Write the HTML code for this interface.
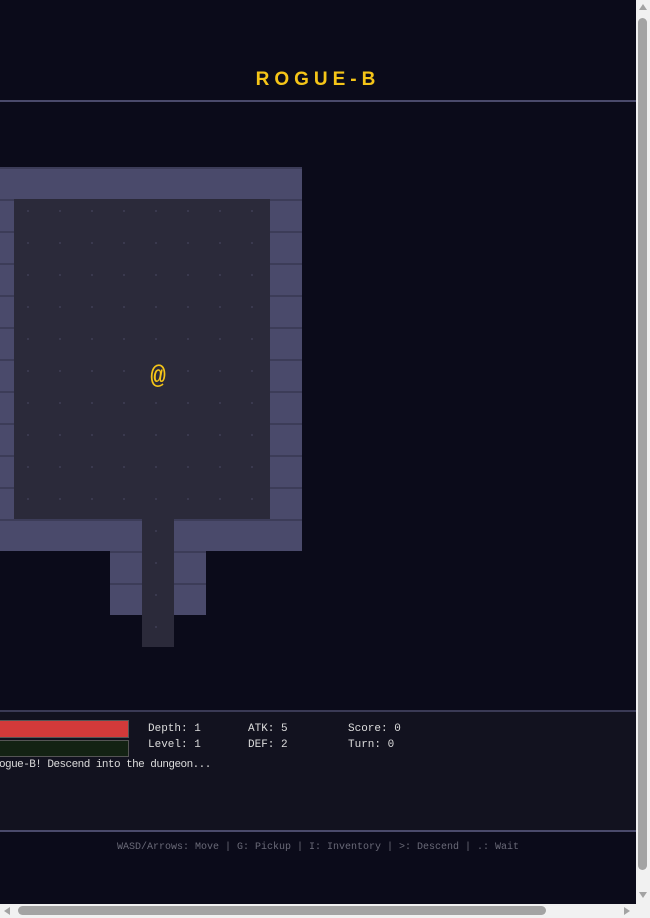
<!DOCTYPE html>
<html><head><meta charset="utf-8"><style>
*{margin:0;padding:0;box-sizing:border-box}
body{width:650px;height:918px;overflow:hidden;background:#f1f1f1;position:relative;font-family:"Liberation Mono",monospace}
#main{position:absolute;left:0;top:0;width:636px;height:904px;background:#0b0b1a;overflow:hidden}
.a{position:absolute}
.title{left:0;width:636px;top:69px;text-align:center;font:bold 19px "Liberation Sans",sans-serif;letter-spacing:5px;color:#f5c518;padding-left:0}
.wall{background-color:#4a4a6b;background-image:linear-gradient(#3c3c58 0 2px,transparent 2px);background-size:32px 32px;background-position:0 0}
.floor{background-color:#2b2a3a;background-image:radial-gradient(circle at 14px 12px,#3b3a50 0 1px,transparent 1.2px);background-size:32px 32px}
.txt{font-size:11px;color:#dcdcdc;white-space:pre;line-height:14px}
</style></head><body>
<div id="main">
  <div class="a title">ROGUE-B</div>
  <div class="a" style="left:0;top:100px;width:636px;height:2px;background:#4a4a6b"></div>

  <div class="a wall" style="left:-18px;top:167px;width:320px;height:32px;background-position:-18px 0"></div>
  <div class="a wall" style="left:-18px;top:199px;width:32px;height:320px"></div>
  <div class="a wall" style="left:270px;top:199px;width:32px;height:320px"></div>
  <div class="a wall" style="left:-18px;top:519px;width:160px;height:32px"></div>
  <div class="a wall" style="left:174px;top:519px;width:128px;height:32px"></div>
  <div class="a wall" style="left:110px;top:551px;width:32px;height:64px"></div>
  <div class="a wall" style="left:174px;top:551px;width:32px;height:64px"></div>
  <div class="a floor" style="left:14px;top:199px;width:256px;height:320px"></div>
  <div class="a floor" style="left:142px;top:519px;width:32px;height:128px"></div>
  <div class="a" style="left:142px;top:358px;width:32px;height:36px;text-align:center;font:bold 26px 'Liberation Mono',monospace;color:#f5c518;line-height:36px">@</div>

  <div class="a" style="left:0;top:710px;width:636px;height:122px;background:#12121f;border-top:2px solid #3a3a55;border-bottom:2px solid #4a4a6b"></div>
  <div class="a" style="left:-2px;top:720px;width:131px;height:18px;background:#d23a3a;border:1px solid #555"></div>
  <div class="a" style="left:-2px;top:740px;width:131px;height:17px;background:#132213;border:1px solid #555"></div>
  <div class="a txt" style="left:148px;top:722px">Depth: 1</div>
  <div class="a txt" style="left:148px;top:738px">Level: 1</div>
  <div class="a txt" style="left:248px;top:722px">ATK: 5</div>
  <div class="a txt" style="left:248px;top:738px">DEF: 2</div>
  <div class="a txt" style="left:348px;top:722px">Score: 0</div>
  <div class="a txt" style="left:348px;top:738px">Turn: 0</div>
  <div class="a txt" style="left:-1px;top:758px;letter-spacing:-0.55px">ogue-B! Descend into the dungeon...</div>
  <div class="a" style="left:0;top:842px;width:636px;text-align:center;font-size:10px;color:#6a6a78;white-space:pre">WASD/Arrows: Move | G: Pickup | I: Inventory | &gt;: Descend | .: Wait</div>
</div>
<div class="a" style="left:638px;top:18px;width:9px;height:852px;background:#a3a3a3;border-radius:5px"></div>
<div class="a" style="left:639px;top:4px;width:0;height:0;border-left:4px solid transparent;border-right:4px solid transparent;border-bottom:6px solid #a3a3a3"></div>
<div class="a" style="left:639px;top:892px;width:0;height:0;border-left:4px solid transparent;border-right:4px solid transparent;border-top:6px solid #a3a3a3"></div>
<div class="a" style="left:18px;top:906px;width:528px;height:9px;background:#a3a3a3;border-radius:5px"></div>
<div class="a" style="left:4px;top:907px;width:0;height:0;border-top:4px solid transparent;border-bottom:4px solid transparent;border-right:6px solid #a3a3a3"></div>
<div class="a" style="left:624px;top:907px;width:0;height:0;border-top:4px solid transparent;border-bottom:4px solid transparent;border-left:6px solid #a3a3a3"></div>
</body></html>
